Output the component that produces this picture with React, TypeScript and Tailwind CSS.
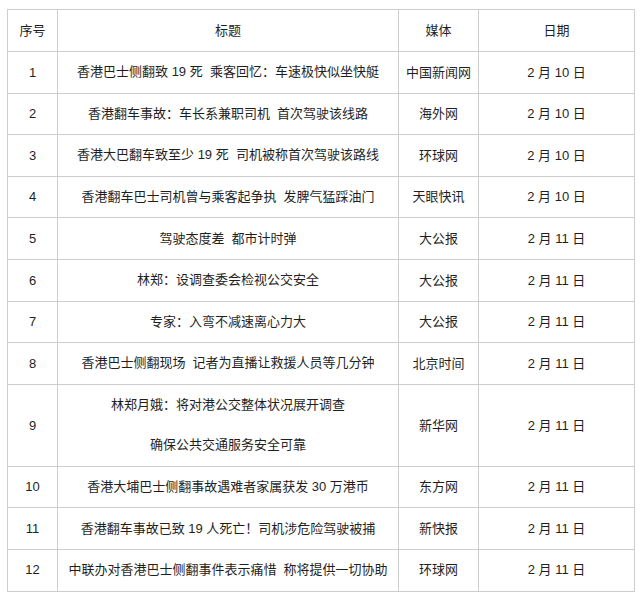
const rows: { no: number; title: string[]; media: string; date: string }[] = [
  { no: 1, title: ["香港巴士侧翻致 19 死  乘客回忆：车速极快似坐快艇"], media: "中国新闻网", date: "2 月 10 日" },
  { no: 2, title: ["香港翻车事故：车长系兼职司机  首次驾驶该线路"], media: "海外网", date: "2 月 10 日" },
  { no: 3, title: ["香港大巴翻车致至少 19 死  司机被称首次驾驶该路线"], media: "环球网", date: "2 月 10 日" },
  { no: 4, title: ["香港翻车巴士司机曾与乘客起争执  发脾气猛踩油门"], media: "天眼快讯", date: "2 月 10 日" },
  { no: 5, title: ["驾驶态度差  都市计时弹"], media: "大公报", date: "2 月 11 日" },
  { no: 6, title: ["林郑：设调查委会检视公交安全"], media: "大公报", date: "2 月 11 日" },
  { no: 7, title: ["专家：入弯不减速离心力大"], media: "大公报", date: "2 月 11 日" },
  { no: 8, title: ["香港巴士侧翻现场  记者为直播让救援人员等几分钟"], media: "北京时间", date: "2 月 11 日" },
  { no: 9, title: ["林郑月娥：将对港公交整体状况展开调查", "确保公共交通服务安全可靠"], media: "新华网", date: "2 月 11 日" },
  { no: 10, title: ["香港大埔巴士侧翻事故遇难者家属获发 30 万港币"], media: "东方网", date: "2 月 11 日" },
  { no: 11, title: ["香港翻车事故已致 19 人死亡！司机涉危险驾驶被捕"], media: "新快报", date: "2 月 11 日" },
  { no: 12, title: ["中联办对香港巴士侧翻事件表示痛惜  称将提供一切协助"], media: "环球网", date: "2 月 11 日" },
];

const cell = "border border-[#cdcdcd] text-center align-middle p-0";

export default function App() {
  return (
    <div className="w-[640px] h-[599px] bg-white pt-[9px] pl-[7px] text-[13px] text-[#1f1f1f] font-['Liberation_Sans','Noto_Sans_CJK_SC',sans-serif]">
      <table className="border-collapse table-fixed w-[627px]">
        <colgroup>
          <col className="w-[50px]" />
          <col className="w-[341px]" />
          <col className="w-[80px]" />
          <col className="w-[156px]" />
        </colgroup>
        <thead>
          <tr className="h-[42px]">
            <th className={`${cell} font-normal`}>序号</th>
            <th className={`${cell} font-normal`}>标题</th>
            <th className={`${cell} font-normal`}>媒体</th>
            <th className={`${cell} font-normal`}>日期</th>
          </tr>
        </thead>
        <tbody>
          {rows.map((row) => (
            <tr key={row.no} className={row.title.length > 1 ? "h-[82px]" : "h-[41.6px]"}>
              <td className={cell}>{row.no}</td>
              <td className={`${cell} whitespace-pre`}>
                <div className="flex flex-col gap-[20px]">
                  {row.title.map((line) => (
                    <div key={line} className="leading-[20px]">
                      {line}
                    </div>
                  ))}
                </div>
              </td>
              <td className={cell}>{row.media}</td>
              <td className={cell}>{row.date}</td>
            </tr>
          ))}
        </tbody>
      </table>
    </div>
  );
}
